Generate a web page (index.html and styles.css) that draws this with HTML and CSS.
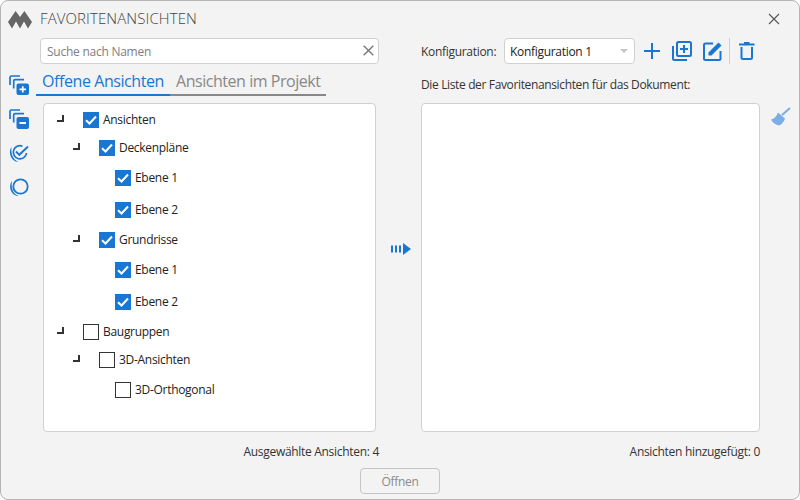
FILE: index.html
```html
<!DOCTYPE html>
<html lang="de">
<head>
<meta charset="utf-8">
<title>Favoritenansichten</title>
<link rel="stylesheet" href="styles.css">
</head>
<body>
<div class="window">
  <header class="titlebar">
    <svg class="logo" width="24" height="18" viewBox="0 0 24 18"><path d="M0 11 7.600 0 12 6 16.400 0 24 11 20 17.500 16 10.500 12 17.500 8 10.500 4 17.500Z" fill="#666"/></svg>
    <span class="title">FAVORITENANSICHTEN</span>
    <svg class="close" width="12" height="12" viewBox="0 0 12 12"><path d="M1 1 11 11M11 1 1 11" stroke="#555" stroke-width="1.1" fill="none"/></svg>
  </header>
  <main class="body">
    <aside class="rail-left">
      <svg class="ri" width="20" height="20" viewBox="0 0 20 20"><g fill="none" stroke="#1976d2" stroke-width="1.700"><path d="M1 10V2.500Q1 1 2.500 1H11"/><path d="M4.700 13.500V6Q4.700 4.600 6.200 4.600H15"/></g><rect x="7.500" y="8.500" width="12.500" height="11.500" rx="2" fill="#1976d2"/><path d="M10.500 14.300H17M13.750 11.200V17.400" stroke="#fff" stroke-width="1.700"/></svg>
      <svg class="ri" width="20" height="20" viewBox="0 0 20 20"><g fill="none" stroke="#1976d2" stroke-width="1.700"><path d="M1 10V2.500Q1 1 2.500 1H11"/><path d="M4.700 13.500V6Q4.700 4.600 6.200 4.600H15"/></g><rect x="7.500" y="8" width="12.500" height="12" rx="2" fill="#1976d2"/><path d="M10.500 14H17" stroke="#fff" stroke-width="1.800"/></svg>
      <svg class="ri" width="20" height="20" viewBox="0 0 20 20"><g fill="none" stroke="#1976d2"><path d="M17.500 10A6.600 6.600 0 1 1 13.500 3.200" stroke-width="1.700"/><path d="M7 8.500 10.300 11.800 19 3.500" stroke-width="1.900"/></g><path d="M2.500 4C-1.500 10 2.500 19 10 19 5.500 17.500 1.500 13 2.500 4Z" fill="#1976d2"/></svg>
      <svg class="ri" width="20" height="20" viewBox="0 0 20 20"><circle cx="11.500" cy="9.500" r="7.200" fill="none" stroke="#1976d2" stroke-width="1.800"/><path d="M3 4C-1.500 10 2.500 19 10 19 5.500 17.500 1.500 13 3 4Z" fill="#1976d2"/></svg>
    </aside>
    <section class="col-left">
      <div class="search">
        <span class="placeholder">Suche nach Namen</span>
        <svg width="11" height="11" viewBox="0 0 11 11"><path d="M.7.7 10.300 10.300M10.300.7.7 10.300" stroke="#777" stroke-width="1.400" fill="none"/></svg>
      </div>
      <div class="tabs">
        <div class="tab active">Offene Ansichten</div>
        <div class="tab">Ansichten im Projekt</div>
      </div>
      <div class="panel tree">
        <div class="row h28 l0"><i class="exp"></i><span class="cb on"><svg width="16" height="16" viewBox="0 0 16 16"><path d="M3 8.200 6.500 11.500 13 4.500" fill="none" stroke="#fff" stroke-width="2"/></svg></span><span class="lbl">Ansichten</span></div>
        <div class="row h30 l1"><i class="exp"></i><span class="cb on"><svg width="16" height="16" viewBox="0 0 16 16"><path d="M3 8.200 6.500 11.500 13 4.500" fill="none" stroke="#fff" stroke-width="2"/></svg></span><span class="lbl">Deckenpläne</span></div>
        <div class="row h32 l2"><span class="cb on"><svg width="16" height="16" viewBox="0 0 16 16"><path d="M3 8.200 6.500 11.500 13 4.500" fill="none" stroke="#fff" stroke-width="2"/></svg></span><span class="lbl">Ebene 1</span></div>
        <div class="row h30 l2"><span class="cb on"><svg width="16" height="16" viewBox="0 0 16 16"><path d="M3 8.200 6.500 11.500 13 4.500" fill="none" stroke="#fff" stroke-width="2"/></svg></span><span class="lbl">Ebene 2</span></div>
        <div class="row h30 l1"><i class="exp"></i><span class="cb on"><svg width="16" height="16" viewBox="0 0 16 16"><path d="M3 8.200 6.500 11.500 13 4.500" fill="none" stroke="#fff" stroke-width="2"/></svg></span><span class="lbl">Grundrisse</span></div>
        <div class="row h32 l2"><span class="cb on"><svg width="16" height="16" viewBox="0 0 16 16"><path d="M3 8.200 6.500 11.500 13 4.500" fill="none" stroke="#fff" stroke-width="2"/></svg></span><span class="lbl">Ebene 1</span></div>
        <div class="row h30 l2"><span class="cb on"><svg width="16" height="16" viewBox="0 0 16 16"><path d="M3 8.200 6.500 11.500 13 4.500" fill="none" stroke="#fff" stroke-width="2"/></svg></span><span class="lbl">Ebene 2</span></div>
        <div class="row h28 l0"><i class="exp"></i><span class="cb"></span><span class="lbl">Baugruppen</span></div>
        <div class="row h30 l1"><i class="exp"></i><span class="cb"></span><span class="lbl">3D-Ansichten</span></div>
        <div class="row h30 l2"><span class="cb"></span><span class="lbl">3D-Orthogonal</span></div>
      </div>
      <div class="status">Ausgewählte Ansichten: 4</div>
    </section>
    <div class="mid">
      <svg width="20" height="12" viewBox="0 0 20 12"><path d="M1 2.500V9.500M5 2.500V9.500M9 2.500V9.500" stroke="#1976d2" stroke-width="2"/><path d="M12 0 20 6 12 12Z" fill="#1976d2"/></svg>
    </div>
    <section class="col-right">
      <div class="config">
        <span class="config-label">Konfiguration:</span>
        <div class="select"><span>Konfiguration 1</span><i class="caret"></i></div>
        <svg class="ic-plus" width="16" height="16" viewBox="0 0 16 16"><path d="M0 8H16M8 0V16" stroke="#1976d2" stroke-width="2"/></svg>
        <svg class="ic-dup" width="20" height="20" viewBox="0 0 20 20"><g fill="none" stroke="#1976d2" stroke-width="2"><rect x="5" y="1" width="14" height="14" rx="1.500"/><path d="M1 5V17.500Q1 19 2.500 19H15"/><path d="M8 8H16M12 4V12"/></g></svg>
        <svg class="ic-edit" width="20" height="20" viewBox="0 0 20 20"><path d="M10 2.500H2.500Q1 2.500 1 4V17.500Q1 19 2.500 19H16Q17.500 19 17.500 17.500V10" fill="none" stroke="#1976d2" stroke-width="2"/><path d="M5.500 14.500V11.500L15.500 1.500 18.500 4.500 8.500 14.500Z" fill="#1976d2"/></svg>
        <span class="sep"></span>
        <svg class="ic-trash" width="16" height="18" viewBox="0 0 16 18"><path d="M0 2.500H15.500M5 1H10.500" stroke="#1976d2" stroke-width="2"/><path d="M2.500 5V15.500Q2.500 17 4 17H11.500Q13 17 13 15.500V5" fill="none" stroke="#1976d2" stroke-width="2"/></svg>
      </div>
      <div class="list-label">Die Liste der Favoritenansichten für das Dokument:</div>
      <div class="panel list"></div>
      <div class="status">Ansichten hinzugefügt: 0</div>
    </section>
    <aside class="rail-right">
      <svg width="20" height="19" viewBox="0 0 20 19"><path d="M11 8 19 1" stroke="#7aaee4" stroke-width="2"/><path d="M7 5.500 14 11.500C13 15 10 18 8 18.500 5 18 1.500 15.500 0 12.500 3 12 6 9 7 5.500Z" fill="#7aaee4"/></svg>
    </aside>
  </main>
  <footer class="footer"><button class="btn" disabled>Öffnen</button></footer>
</div>
</body>
</html>
```
FILE: styles.css
```css
* { box-sizing: border-box; }
html, body { margin: 0; padding: 0; background: #fff; }
body { width: 800px; height: 500px; overflow: hidden; font-family: "Open Sans", "Noto Sans", sans-serif; font-size: 12px; color: #222; }
.window { width: 800px; height: 500px; display: flex; flex-direction: column; background: #f3f3f3; border: 1px solid #b4b4b4; border-radius: 8px; overflow: hidden; }
.titlebar { height: 37px; flex: none; display: flex; align-items: center; padding: 0 19px 0 7px; }
.logo { margin-top: 1px; }
.title { margin: -3px 0 0 8px; font-size: 15px; font-weight: 300; color: #444; letter-spacing: 0.1px; }
.close { margin: -1px 0 0 auto; }
.body { height: 423px; flex: none; display: flex; }
.rail-left { width: 35px; flex: none; padding: 37px 0 0 8px; display: flex; flex-direction: column; gap: 14px; }
.ri { display: block; }
.col-left { width: 344px; flex: none; display: flex; flex-direction: column; }
.search { height: 26px; margin-left: 4px; width: 339px; display: flex; align-items: center; justify-content: space-between; padding: 0 4px 0 6px; background: #fff; border: 1px solid #d0d0d0; border-radius: 4px; }
.placeholder { padding-top: 2px; color: #808080; letter-spacing: -0.25px; }
.tabs { margin-top: 6px; height: 26px; display: flex; }
.tab { padding: 0 6px; line-height: 23px; height: 26px; font-size: 16px; color: #888; border-bottom: 2px solid #888; letter-spacing: -0.46px; }
.tab.active { color: #1976d2; border-bottom-color: #1976d2; letter-spacing: -0.42px; }
.panel { background: #fff; border: 1px solid #d0d0d0; border-radius: 4px; height: 330px; margin-top: 7px; }
.tree { margin-left: 7px; width: 333px; }
.row { display: flex; align-items: flex-start; position: relative; padding-top: 7px; }
.row:first-child { margin-top: 1px; }
.h28 { height: 28px; }
.h30 { height: 30px; }
.h32 { height: 32px; }
.l0 { padding-left: 39px; }
.l1 { padding-left: 55px; }
.l2 { padding-left: 71px; }
.exp { position: absolute; top: 10px; width: 7px; height: 7px; border-right: 2px solid #333; border-bottom: 2px solid #333; }
.l0 .exp { left: 13px; }
.l1 .exp { left: 29px; }
.cb { width: 16px; height: 16px; flex: none; border: 1px solid #333; background: #fff; display: block; }
.cb.on { border: 0; background: #1976d2; }
.cb svg { display: block; }
.lbl { margin-left: 4px; line-height: 16px; letter-spacing: -0.3px; }
.status { margin-top: 11px; height: 18px; line-height: 18px; text-align: right; letter-spacing: -0.3px; color: #333; }
.col-left .status { padding-right: 1px; }
.mid { width: 41px; flex: none; padding-top: 205px; padding-left: 11px; }
.mid svg { display: block; }
.col-right { width: 339px; flex: none; display: flex; flex-direction: column; }
.config { height: 26px; display: flex; align-items: center; position: relative; }
.config-label { width: 83px; flex: none; letter-spacing: -0.3px; color: #333; }
.select { width: 131px; height: 26px; flex: none; display: flex; align-items: center; justify-content: space-between; padding: 0 6px 0 5px; background: #fff; border: 1px solid #d0d0d0; border-radius: 4px; letter-spacing: -0.3px; }
.caret { width: 0; height: 0; border-left: 4px solid transparent; border-right: 4px solid transparent; border-top: 4px solid #c4c4c4; }
.ic-plus { margin-left: 9px; }
.ic-dup { margin-left: 12px; }
.ic-edit { margin-left: 11px; }
.sep { width: 1px; height: 26px; margin-left: 6px; background: #d0d0d0; }
.ic-trash { margin-left: 9px; }
.list-label { margin-top: 12px; height: 18px; line-height: 18px; letter-spacing: -0.36px; color: #333; }
.list-label + .panel { margin-top: 9px; }
.rail-right { flex: none; padding: 69px 0 0 11px; }
.footer { display: flex; justify-content: center; padding-top: 7px; }
.btn { width: 80px; height: 26px; background: #f3f3f3; border: 1px solid #c4c4c4; border-radius: 4px; font: inherit; color: #8a8a8a; padding: 0; letter-spacing: -0.3px; }
```
